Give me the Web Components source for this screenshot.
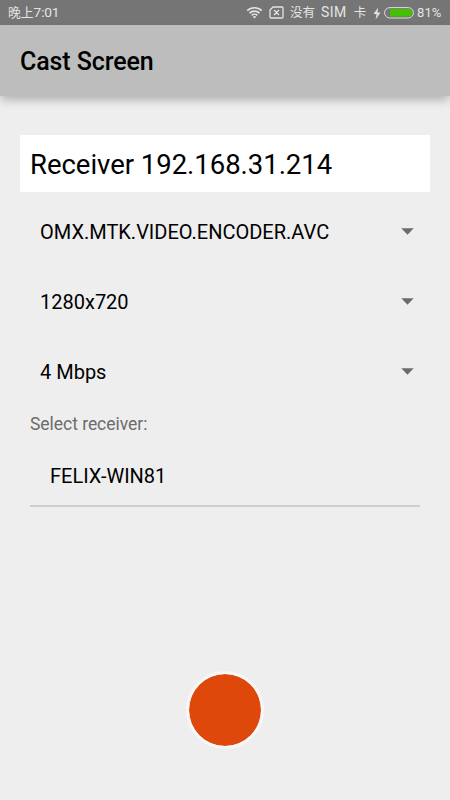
<!DOCTYPE html>
<html lang="zh">
<head>
<meta charset="utf-8">
<title>Cast Screen</title>
<style>
body { margin: 0; background: #eee; font-family: Roboto, "Noto Sans CJK SC", sans-serif; color: #000; }
</style>
</head>
<body>
<cast-app></cast-app>
<script>
const define = (name, html) => customElements.define(name, class extends HTMLElement {
  constructor() {
    super();
    this.attachShadow({ mode: 'open' }).innerHTML = html;
  }
});

define('status-bar', `
<style>
:host { display: flex; align-items: center; height: 25px; box-sizing: border-box; padding: 0 8px; background: #757575; color: #e4e4e4; font-size: 13px; line-height: 25px; white-space: pre; }
.time { flex: 1; font-size: 12.8px; }
.digits { font-size: 13.7px; letter-spacing: -.15px; }
svg { display: block; flex: none; }
.wifi { margin-right: 6px; }
.sim { margin-right: 6px; }
.carrier { width: 78px; display: flex; font-size: 12.5px; }
.latin { font-size: 14px; margin: 0 7px 0 6px; letter-spacing: .45px; }
.bolt { margin: 1px 3px 0 5px; }
.battery { margin-right: 3px; }
.pct { width: 25px; letter-spacing: .1px; }
</style>
<span class="time">晚上<span class="digits">7:01</span></span>
<svg class="wifi" width="17" height="13" viewBox="0 0 17 13" fill="none" stroke="#e4e4e4" stroke-width="1.6">
  <path d="M1.2 4.7a10.5 10.5 0 0 1 14.6 0M3.5 7.1a7.2 7.2 0 0 1 10 0M5.7 9.4a4 4 0 0 1 5.6 0"/><path d="M8.5 12.5L6.8 10.7a2.5 2.5 0 0 1 3.4 0z" fill="#e4e4e4" stroke="none"/>
</svg>
<svg class="sim" width="15" height="13" viewBox="0 0 15 13" fill="none" stroke="#e4e4e4" stroke-width="1.3">
  <path d="M4 1H13Q14 1 14 2V11Q14 12 13 12H2Q1 12 1 11V4ZM5 4l5 5M10 4L5 9"/>
</svg>
<span class="carrier"><span>没有</span><span class="latin">SIM</span><span>卡</span></span>
<svg class="bolt" width="8" height="13" viewBox="0 0 8 13"><path d="M5.2 .5L.5 7H3.6L2.6 12.5L7.5 5.4H4.4Z" fill="#e4e4e4"/></svg>
<svg class="battery" width="30" height="12" viewBox="0 0 30 12"><rect x=".6" y=".6" width="28.8" height="10.4" rx="5.2" fill="none" stroke="#ddd"/><path d="M6 2H24.5A3.8 3.8 0 0 1 24.5 9.6H6Z" fill="#44c000"/></svg>
<span class="pct">81%</span>`);

define('app-bar', `
<style>
:host { display: flex; align-items: center; height: 71px; box-sizing: border-box; padding: 2px 20px 0; background: #bdbdbd; box-shadow: 0 5px 9px -1px rgba(0,0,0,.26); font-size: 25px; font-weight: 500; letter-spacing: -.1px; }
span { white-space: nowrap; }
</style>
<span><slot></slot></span>`);

define('receiver-title', `
<style>
:host { display: flex; align-items: center; height: 57px; box-sizing: border-box; padding: 2px 10px 0; background: #fff; font-size: 27.5px; letter-spacing: -.03px; white-space: nowrap; }
</style><span><slot></slot></span>`);

define('drop-down', `
<style>
:host { display: flex; align-items: center; justify-content: space-between; height: 70px; box-sizing: border-box; padding: 10px 16px 0 20px; font-size: 20px; white-space: nowrap; }
svg { display: block; margin-top: -2px; }
</style><span><slot></slot></span><svg width="13" height="7" viewBox="0 0 13 7"><path d="M.3 .2H12.7L6.5 6.8Z" fill="#6b6b6b"/></svg>`);

define('receiver-list', `
<style>
:host { display: block; padding: 5px 10px 0; }
.label { height: 34px; line-height: 35px; font-size: 17.5px; letter-spacing: -.04px; color: #6c6c6c; }
.item { height: 64px; line-height: 70px; padding-left: 20px; font-size: 20px; border-bottom: 2px solid #cecece; }
</style><div class="label"><slot name="label"></slot></div><div class="item"><slot></slot></div>`);

define('record-button', `
<style>
:host { display: block; width: 72px; height: 72px; border: 3px solid #f7f7f7; border-radius: 50%; background: #df480b; background-clip: padding-box; }
</style>`);

define('cast-app', `
<style>
:host { display: flex; flex-direction: column; height: 800px; overflow: hidden; }
main { flex: 1; display: flex; flex-direction: column; padding: 39px 20px 51px; }
record-button { margin: auto auto 0; }
</style>
<status-bar></status-bar>
<app-bar>Cast Screen</app-bar>
<main>
  <receiver-title>Receiver 192.168.31.214</receiver-title>
  <drop-down>OMX.MTK.VIDEO.ENCODER.AVC</drop-down>
  <drop-down>1280x720</drop-down>
  <drop-down>4 Mbps</drop-down>
  <receiver-list><span slot="label">Select receiver:</span>FELIX-WIN81</receiver-list>
  <record-button></record-button>
</main>`);
</script>
</body>
</html>
